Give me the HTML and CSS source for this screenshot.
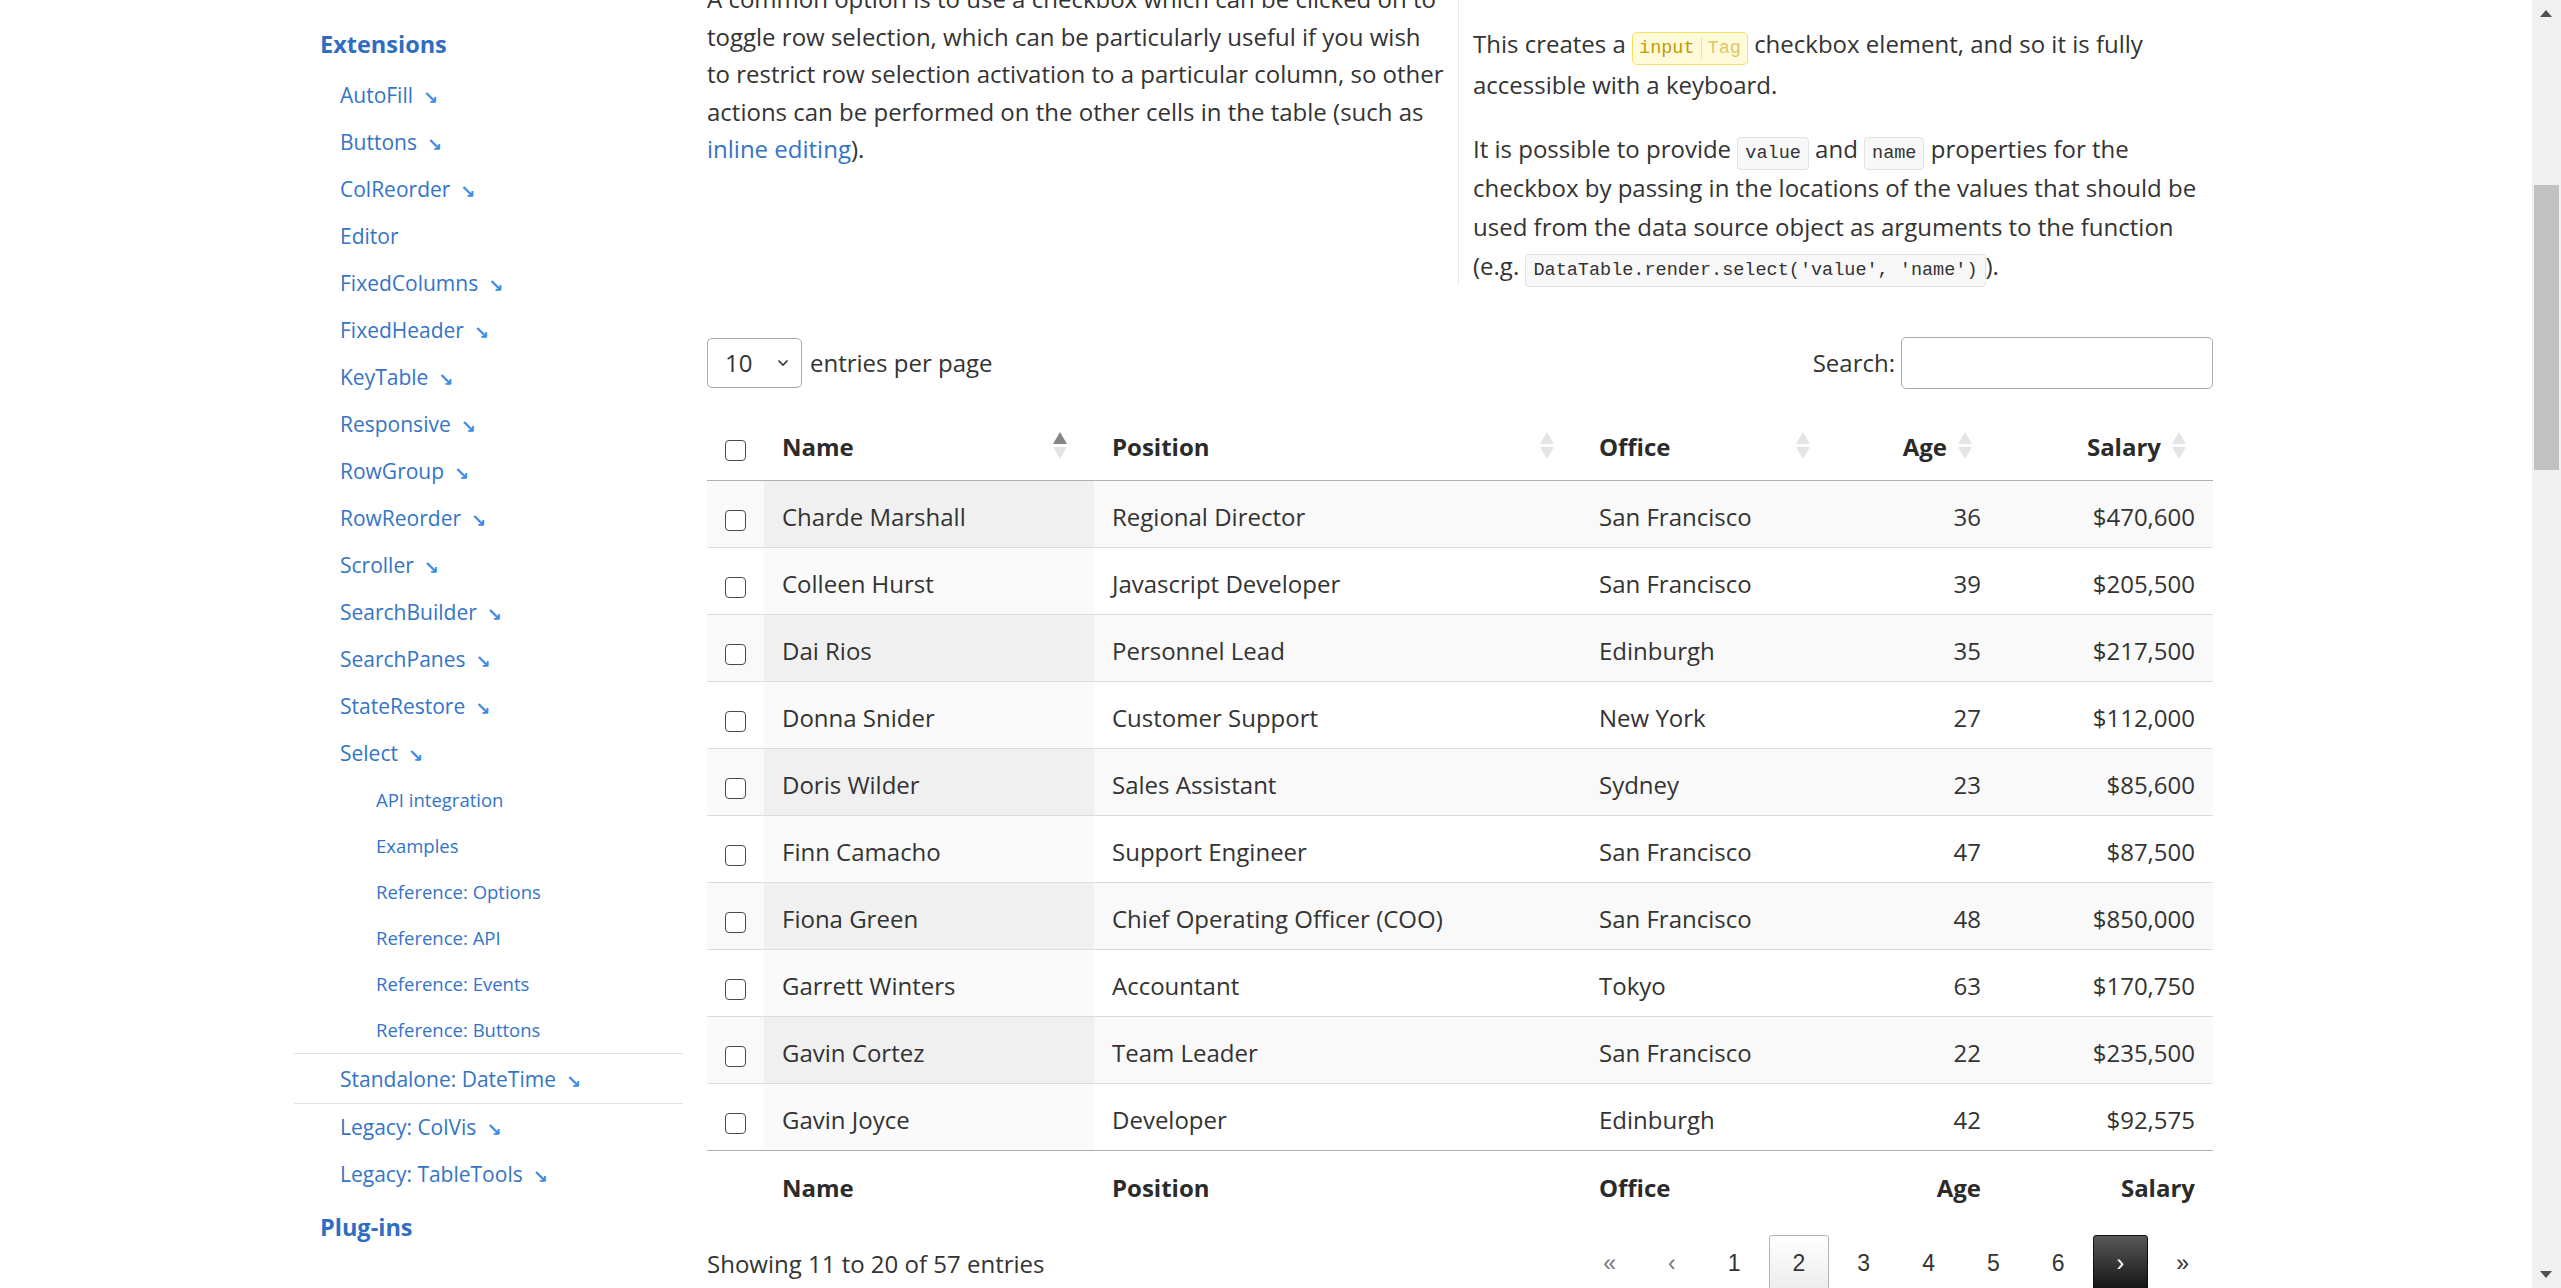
FILE: index.html
```html
<!DOCTYPE html>
<html lang="en">
<head>
<meta charset="utf-8">
<title>DataTables Select - Checkbox selection</title>
<link rel="stylesheet" href="styles.css">
</head>
<body>
<div class="layout">
  <nav class="sidebar">
    <h3 class="nav-head">Extensions</h3>
    <ul class="nav-list">
      <li><a class="ext">AutoFill</a></li>
      <li><a class="ext">Buttons</a></li>
      <li><a class="ext">ColReorder</a></li>
      <li><a>Editor</a></li>
      <li><a class="ext">FixedColumns</a></li>
      <li><a class="ext">FixedHeader</a></li>
      <li><a class="ext">KeyTable</a></li>
      <li><a class="ext">Responsive</a></li>
      <li><a class="ext">RowGroup</a></li>
      <li><a class="ext">RowReorder</a></li>
      <li><a class="ext">Scroller</a></li>
      <li><a class="ext">SearchBuilder</a></li>
      <li><a class="ext">SearchPanes</a></li>
      <li><a class="ext">StateRestore</a></li>
      <li><a class="ext">Select</a>
        <ul class="sub-list">
          <li><a>API integration</a></li>
          <li><a>Examples</a></li>
          <li><a>Reference: Options</a></li>
          <li><a>Reference: API</a></li>
          <li><a>Reference: Events</a></li>
          <li><a>Reference: Buttons</a></li>
        </ul>
      </li>
      <li class="standalone"><a class="ext">Standalone: DateTime</a></li>
      <li><a class="ext">Legacy: ColVis</a></li>
      <li><a class="ext">Legacy: TableTools</a></li>
    </ul>
    <h3 class="nav-head plug">Plug-ins</h3>
  </nav>

  <main class="content">
    <div class="intro">
      <div class="col-left">
        <p>A common option is to use a checkbox which can be clicked on to<br>toggle row selection, which can be particularly useful if you wish<br>to restrict row selection activation to a particular column, so other<br>actions can be performed on the other cells in the table (such as<br><a class="link">inline editing</a>).</p>
      </div>
      <div class="col-right">
        <p class="p-first">This creates a <code class="tag"><span class="tag-name">input</span><span class="tag-type">Tag</span></code> checkbox element, and so it is fully<br>accessible with a keyboard.</p>
        <p class="p-second">It is possible to provide <code class="code">value</code> and <code class="code">name</code> properties for the<br>checkbox by passing in the locations of the values that should be<br>used from the data source object as arguments to the function<br>(e.g. <code class="code">DataTable.render.select('value', 'name')</code>).</p>
      </div>
    </div>

    <div class="dt">
      <div class="dt-top">
        <div class="dt-length">
          <div class="select-box"><span>10</span>
            <svg class="chev" width="12" height="8" viewBox="0 0 12 8"><path d="M1.5 1.5 L6 6 L10.5 1.5" fill="none" stroke="#333" stroke-width="1.6"/></svg>
          </div>
          <span>entries per page</span>
        </div>
        <div class="dt-search">
          <label>Search:</label>
          <input type="search" class="search-input">
        </div>
      </div>

      <table class="dt-table">
        <colgroup>
          <col class="c-check"><col class="c-name"><col class="c-pos"><col class="c-off"><col class="c-age"><col class="c-sal">
        </colgroup>
        <thead>
          <tr>
            <th class="chk"><input type="checkbox" class="cb"></th>
            <th class="sortable">Name<span class="sort asc"><i class="up"></i><i class="down"></i></span></th>
            <th class="sortable">Position<span class="sort"><i class="up"></i><i class="down"></i></span></th>
            <th class="sortable">Office<span class="sort"><i class="up"></i><i class="down"></i></span></th>
            <th class="sortable num">Age<span class="sort"><i class="up"></i><i class="down"></i></span></th>
            <th class="sortable num">Salary<span class="sort"><i class="up"></i><i class="down"></i></span></th>
          </tr>
        </thead>
        <tbody>
          <tr><td class="chk"><input type="checkbox" class="cb"></td><td class="sorted">Charde Marshall</td><td>Regional Director</td><td>San Francisco</td><td class="num">36</td><td class="num">$470,600</td></tr>
          <tr><td class="chk"><input type="checkbox" class="cb"></td><td class="sorted">Colleen Hurst</td><td>Javascript Developer</td><td>San Francisco</td><td class="num">39</td><td class="num">$205,500</td></tr>
          <tr><td class="chk"><input type="checkbox" class="cb"></td><td class="sorted">Dai Rios</td><td>Personnel Lead</td><td>Edinburgh</td><td class="num">35</td><td class="num">$217,500</td></tr>
          <tr><td class="chk"><input type="checkbox" class="cb"></td><td class="sorted">Donna Snider</td><td>Customer Support</td><td>New York</td><td class="num">27</td><td class="num">$112,000</td></tr>
          <tr><td class="chk"><input type="checkbox" class="cb"></td><td class="sorted">Doris Wilder</td><td>Sales Assistant</td><td>Sydney</td><td class="num">23</td><td class="num">$85,600</td></tr>
          <tr><td class="chk"><input type="checkbox" class="cb"></td><td class="sorted">Finn Camacho</td><td>Support Engineer</td><td>San Francisco</td><td class="num">47</td><td class="num">$87,500</td></tr>
          <tr><td class="chk"><input type="checkbox" class="cb"></td><td class="sorted">Fiona Green</td><td>Chief Operating Officer (COO)</td><td>San Francisco</td><td class="num">48</td><td class="num">$850,000</td></tr>
          <tr><td class="chk"><input type="checkbox" class="cb"></td><td class="sorted">Garrett Winters</td><td>Accountant</td><td>Tokyo</td><td class="num">63</td><td class="num">$170,750</td></tr>
          <tr><td class="chk"><input type="checkbox" class="cb"></td><td class="sorted">Gavin Cortez</td><td>Team Leader</td><td>San Francisco</td><td class="num">22</td><td class="num">$235,500</td></tr>
          <tr><td class="chk"><input type="checkbox" class="cb"></td><td class="sorted">Gavin Joyce</td><td>Developer</td><td>Edinburgh</td><td class="num">42</td><td class="num">$92,575</td></tr>
        </tbody>
        <tfoot>
          <tr><th></th><th>Name</th><th>Position</th><th>Office</th><th class="num">Age</th><th class="num">Salary</th></tr>
        </tfoot>
      </table>

      <div class="dt-bottom">
        <div class="dt-info">Showing 11 to 20 of 57 entries</div>
        <div class="dt-paging">
          <span class="pg disabled">«</span>
          <span class="pg disabled">‹</span>
          <span class="pg">1</span>
          <span class="pg current">2</span>
          <span class="pg">3</span>
          <span class="pg">4</span>
          <span class="pg">5</span>
          <span class="pg">6</span>
          <span class="pg hover">›</span>
          <span class="pg">»</span>
        </div>
      </div>
    </div>
  </main>
</div>

<div class="scrollbar">
  <span class="sb-up"></span>
  <span class="sb-thumb"></span>
  <span class="sb-down"></span>
</div>
</body>
</html>
```

FILE: styles.css
```css
html {
  overflow: hidden;
}

body {
  margin: 0;
  background: #ffffff;
  color: #333333;
  font-family: "Open Sans", "Noto Sans", "Liberation Sans", sans-serif;
  font-size: 24px;
  height: 1288px;
  overflow: hidden;
}

a {
  color: #3474c6;
  text-decoration: none;
}

.layout {
  display: flex;
  align-items: flex-start;
  gap: 24px;
  padding-left: 294px;
}

/* ---------- sidebar ---------- */
.sidebar {
  width: 389px;
  flex: none;
  padding-top: 24px;
}

.nav-head {
  margin: 0 0 8px 0;
  padding-left: 26px;
  font-size: 23.5px;
  line-height: 40px;
  font-weight: 700;
  color: #2f6dc2;
}

.nav-head.plug {
  margin-top: 9px;
}

.nav-list,
.sub-list {
  list-style: none;
  margin: 0;
  padding: 0;
}

.nav-list > li > a {
  display: block;
  padding-left: 46px;
  height: 47px;
  line-height: 47px;
  font-size: 21px;
}

.sub-list a {
  display: block;
  padding-left: 82px;
  height: 46px;
  line-height: 46px;
  font-size: 18.5px;
}

.ext::after {
  content: "\2198";
  font-family: "DejaVu Sans", sans-serif;
  font-weight: 700;
  font-size: 18px;
  line-height: 0;
  color: #3d8be2;
  margin-left: 10px;
  vertical-align: -1px;
}

.nav-list > li.standalone {
  border-top: 1px solid #e2e2e2;
  border-bottom: 1px solid #e2e2e2;
  padding-top: 2px;
}

/* ---------- main ---------- */
.content {
  width: 1506px;
  flex: none;
}

.intro {
  display: flex;
  align-items: flex-start;
  margin-top: -20px;
}

.intro p {
  margin: 0;
}

.col-left {
  width: 751px;
  flex: none;
  line-height: 37.5px;
  white-space: nowrap;
}

.col-right {
  flex: 1;
  border-left: 1px solid #ececec;
  padding-left: 14px;
  padding-top: 43px;
  white-space: nowrap;
}

.col-right .p-first {
  line-height: 41px;
}

.col-right .p-second {
  margin-top: 23.5px;
  line-height: 39px;
}

.link {
  color: #3474c6;
}

code {
  font-family: "Liberation Mono", "DejaVu Sans Mono", monospace;
  font-size: 18.5px;
  line-height: 1;
}

.code {
  background: #f8f8f8;
  border: 1px solid #e2e2e2;
  border-radius: 4px;
  padding: 5px 7px;
  color: #333;
}

.tag {
  background: #fffbd9;
  border: 1px solid #f3df63;
  border-radius: 5px;
  padding: 5px 0;
}

.tag-name {
  color: #bd9c07;
  padding: 0 6px;
}

.tag-type {
  color: #dcc56c;
  border-left: 1px solid #e3e0d0;
  padding: 0 6px;
}

/* ---------- datatable ---------- */
.dt {
  margin-top: 52px;
}

.dt-top {
  display: flex;
  justify-content: space-between;
  align-items: center;
  height: 52px;
}

.dt-length {
  display: flex;
  align-items: center;
  gap: 8px;
}

.select-box {
  box-sizing: border-box;
  width: 95px;
  height: 50px;
  border: 1px solid #aaaaaa;
  border-radius: 5px;
  display: flex;
  align-items: center;
  justify-content: space-between;
  padding: 0 12px 0 17px;
  background: #fff;
}

.dt-search {
  display: flex;
  align-items: center;
  gap: 6px;
}

.search-input {
  box-sizing: border-box;
  width: 312px;
  height: 52px;
  border: 1px solid #aaaaaa;
  border-radius: 5px;
  margin: 0;
  background: #fff;
  font: inherit;
}

.dt-table {
  width: 1506px;
  margin-top: 25px;
  border-collapse: separate;
  border-spacing: 0;
  table-layout: fixed;
}

.c-check { width: 57px; }
.c-name { width: 330px; }
.c-pos { width: 487px; }
.c-off { width: 256px; }
.c-age { width: 162px; }
.c-sal { width: 214px; }

.dt-table th,
.dt-table td {
  line-height: 34px;
  text-align: left;
  white-space: nowrap;
}

.dt-table thead th {
  position: relative;
  padding: 16px 52px 16px 18px;
  border-bottom: 1px solid #b0b0b0;
  font-weight: 700;
  color: #2b2b2b;
}

.dt-table th.chk,
.dt-table td.chk {
  padding-left: 0;
  padding-right: 0;
  text-align: center;
}

.dt-table tbody td {
  padding: 19px 18px 13px 18px;
  border-bottom: 1px solid #dcdcdc;
}

.dt-table tbody tr:last-child td {
  border-bottom: none;
}

.dt-table tbody tr:nth-child(odd) td {
  background: #f9f9f9;
}

.dt-table tbody tr:nth-child(odd) td.sorted {
  background: #f0f0f0;
}

.dt-table tbody tr:nth-child(even) td.sorted {
  background: #fafafa;
}

.dt-table .num {
  text-align: right;
}

.dt-table tfoot th {
  padding: 20px 18px 12px 18px;
  border-top: 1px solid #b0b0b0;
  font-weight: 700;
  color: #2b2b2b;
}

.dt-table tfoot th.num {
  text-align: right;
}

.cb {
  appearance: none;
  -webkit-appearance: none;
  box-sizing: border-box;
  width: 21px;
  height: 21px;
  margin: 0;
  border: 1.5px solid #4a4a4a;
  border-radius: 4px;
  background: #fff;
  vertical-align: middle;
  position: relative;
  top: 1px;
}

.sort {
  position: absolute;
  right: 27px;
  top: 50%;
  margin-top: -15px;
  width: 14px;
  display: flex;
  flex-direction: column;
  align-items: center;
  gap: 3px;
}

.sort i {
  display: block;
  width: 0;
  height: 0;
  border-left: 7px solid transparent;
  border-right: 7px solid transparent;
}

.sort .up {
  border-bottom: 12px solid #e4e4e4;
}

.sort .down {
  border-top: 12px solid #e4e4e4;
}

.sort.asc .up {
  border-bottom-color: #858585;
}

.dt-bottom {
  display: flex;
  justify-content: space-between;
  align-items: center;
  margin-top: 18px;
}

.dt-paging {
  display: flex;
  gap: 4px;
  font-family: "Liberation Sans", Arial, sans-serif;
  font-size: 23px;
}

.pg {
  box-sizing: border-box;
  height: 58px;
  min-width: 34px;
  padding: 0 23px;
  border: 1px solid transparent;
  border-radius: 3px;
  display: flex;
  align-items: center;
  justify-content: center;
  color: #333;
}

.pg.disabled {
  color: #777;
}

.pg.current {
  border-color: #b3b3b3;
  background: linear-gradient(to bottom, #ffffff 0%, #ececec 100%);
}

.pg.hover {
  border-color: #111;
  color: #fff;
  background: linear-gradient(to bottom, #585858 0%, #111111 100%);
}

/* ---------- fake window scrollbar ---------- */
.scrollbar {
  position: fixed;
  top: 0;
  right: 0;
  width: 29px;
  height: 1288px;
  background: #f0f0f0;
}

.sb-thumb {
  position: absolute;
  left: 2px;
  top: 185px;
  width: 25px;
  height: 285px;
  background: #c1c1c1;
}

.sb-up,
.sb-down {
  position: absolute;
  left: 8px;
  width: 0;
  height: 0;
  border-left: 6.5px solid transparent;
  border-right: 6.5px solid transparent;
}

.sb-up {
  top: 10px;
  border-bottom: 7px solid #505050;
}

.sb-down {
  bottom: 10px;
  border-top: 7px solid #505050;
}
```
